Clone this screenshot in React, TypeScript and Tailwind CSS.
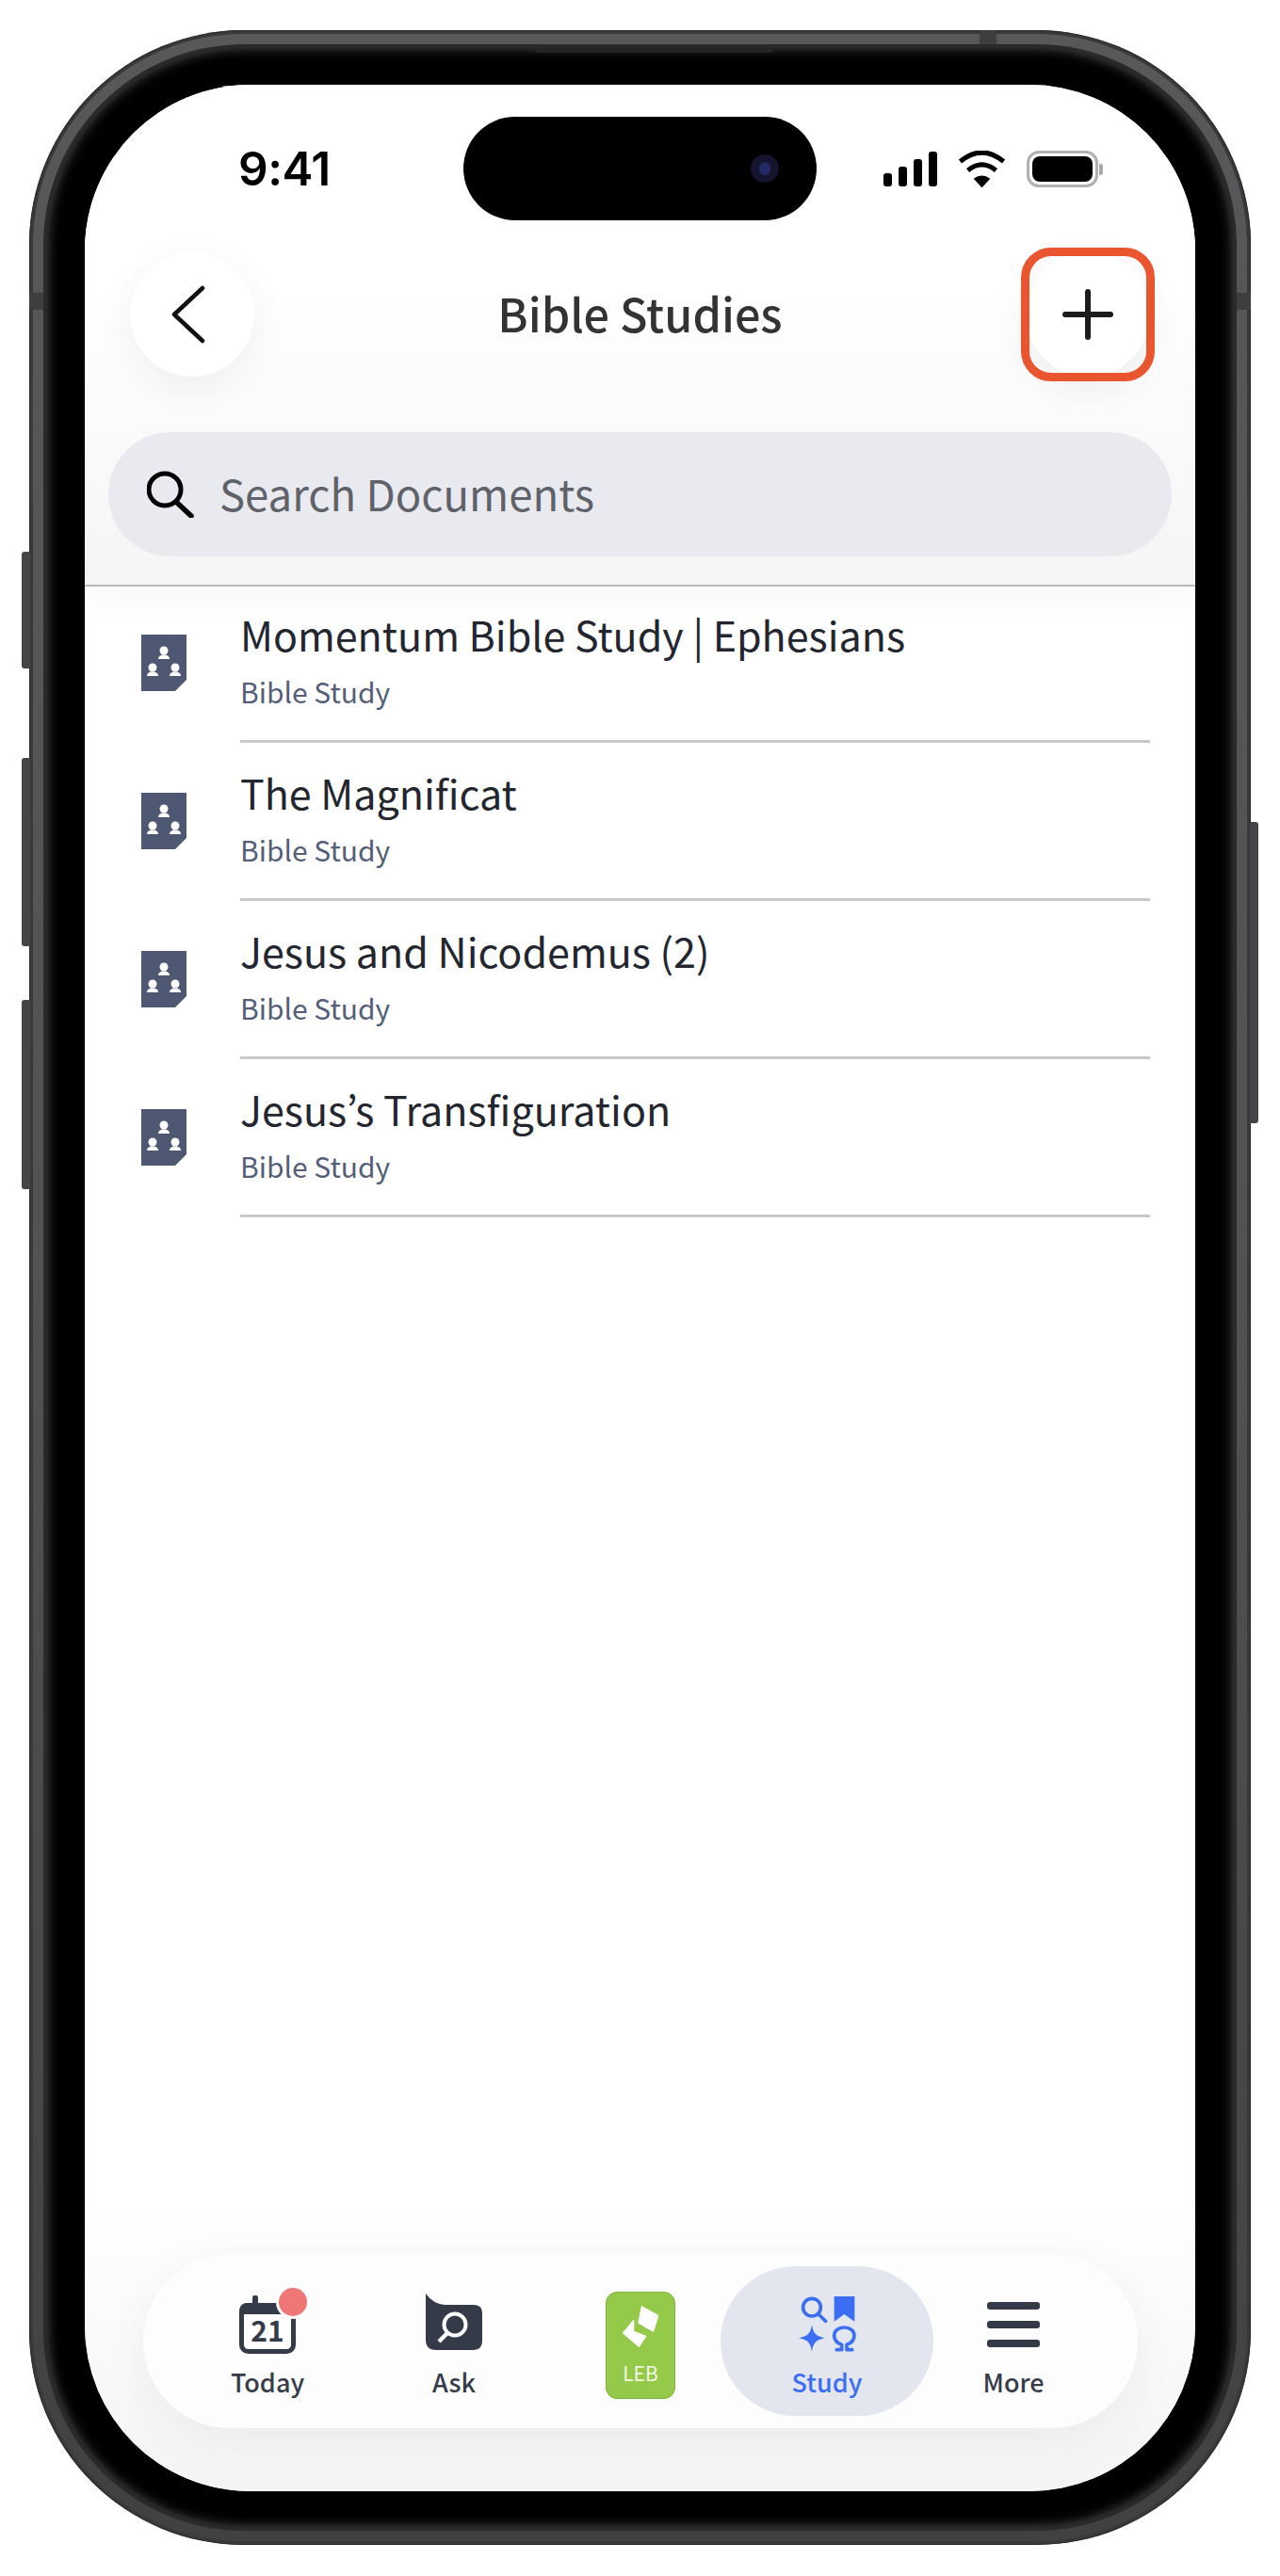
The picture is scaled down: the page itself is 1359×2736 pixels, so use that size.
const DOCS = ["Momentum Bible Study | Ephesians", "The Magnificat", "Jesus and Nicodemus (2)", "Jesus’s Transfiguration"];

function Signal() {
  return (
    <div className="flex h-[37px] items-end gap-[7px]">
      <div className="h-[14px] w-[9px] rounded-[3px] bg-black" />
      <div className="h-[21px] w-[9px] rounded-[3px] bg-black" />
      <div className="h-[29px] w-[9px] rounded-[3px] bg-black" />
      <div className="h-[37px] w-[9px] rounded-[3px] bg-black" />
    </div>
  );
}

function Wifi() {
  return (
    <svg width="51" height="39" viewBox="275 30 150 115">
      <path d="M282 64 Q350 8 418 64" fill="none" stroke="#000" strokeWidth="15" />
      <path d="M306 92 Q350 56 394 92" fill="none" stroke="#000" strokeWidth="15" />
      <path d="M350 146 L324 118 Q350 98 376 118 Z" fill="#000" />
    </svg>
  );
}

function Battery() {
  return (
    <div className="flex items-center gap-[1px]">
      <div className="flex h-[39px] w-[76px] rounded-[13px] border-[3px] border-[#b0b0b0] p-[3px]">
        <div className="flex-1 rounded-[8px] bg-black" />
      </div>
      <div className="h-[12px] w-[4px] rounded-r-[3px] bg-[#a8a8a8]" />
    </div>
  );
}

function DocIcon() {
  return (
    <svg width="48" height="60" viewBox="0 0 48 60" className="shrink-0">
      <path d="M0 0 H48 V48 L36 60 H0 Z" fill="#4f5872" />
      <g fill="#fff">
        <circle cx="24" cy="17" r="4.5" />
        <path d="M18 26 C18 23.5 20 21.5 24 21.5 C28 21.5 30 23.5 30 26 Z" />
        <circle cx="12" cy="35" r="4.5" />
        <path d="M6 44 C6 41.5 8 39.5 12 39.5 C16 39.5 18 41.5 18 44 Z" />
        <circle cx="36" cy="35" r="4.5" />
        <path d="M30 44 C30 41.5 32 39.5 36 39.5 C40 39.5 42 41.5 42 44 Z" />
      </g>
    </svg>
  );
}

function CalendarIcon() {
  return (
    <svg width="60" height="62" viewBox="0 0 60 62" className="overflow-visible">
      <rect x="14" y="0" width="6" height="12" rx="2" fill="#343a48" />
      <rect x="2.5" y="10.5" width="55" height="49" rx="7" fill="#fff" stroke="#343a48" strokeWidth="5" />
      <path d="M0 17 Q0 8 9 8 H51 Q60 8 60 17 V20 H0 Z" fill="#343a48" />
      <text x="30" y="49" textAnchor="middle" fontSize="30" fontWeight="700" fill="#343a48" fontFamily="'Noto Sans CJK JP', sans-serif">21</text>
      <circle cx="57" cy="7" r="18" fill="#fff" />
      <circle cx="57" cy="7" r="15" fill="#ef7776" />
    </svg>
  );
}

function AskIcon() {
  return (
    <svg width="60" height="60" viewBox="0 0 60 60">
      <path d="M0 0 Q8 11 20 12 H51 Q60 12 60 21 V50 Q60 60 50 60 H11 Q0 60 0 49 Z" fill="#343a48" />
      <circle cx="31" cy="33" r="11.5" fill="none" stroke="#fff" strokeWidth="4" />
      <path d="M23 42 L14 51" stroke="#fff" strokeWidth="4.5" />
    </svg>
  );
}

function StudyIcon() {
  return (
    <svg width="85" height="75" viewBox="0 0 255 225">
      <g fill="none" stroke="#3b6ef0" strokeWidth="11">
        <circle cx="78" cy="62" r="28" />
        <path d="M99 84 L122 106" strokeLinecap="round" />
        <path d="M157 197 H173 V181 C157 175 149 164 149 152 C149 136 163 126 181 126 C199 126 213 136 213 152 C213 164 205 175 189 181 V197 H206" strokeLinejoin="round" strokeLinecap="round" />
      </g>
      <path d="M149 27 H214 V107 L181 84 L149 107 Z" fill="#3b6ef0" />
      <path d="M78 118 C82 145 92 155 120 160 C92 165 82 175 78 203 C74 175 64 165 36 160 C64 155 74 145 78 118 Z" fill="#3b6ef0" />
    </svg>
  );
}

export default function App() {
  return (
    <div className="h-[2736px] w-[1359px] bg-white pl-[31px] pt-[32px] font-['Noto_Sans_CJK_JP',sans-serif]">
      {/* device frame */}
      <div className="relative h-[2671px] w-[1297px] rounded-[228px] bg-[#39393b] p-[4px] shadow-[inset_0_0_0_1px_#2c2c2e]">
        <div className="absolute left-[-8px] top-[554px] h-[124px] w-[9px] rounded-l-[3px] bg-[#454547]" />
        <div className="absolute left-[-8px] top-[773px] h-[200px] w-[9px] rounded-l-[3px] bg-[#454547]" />
        <div className="absolute left-[-8px] top-[1030px] h-[201px] w-[9px] rounded-l-[3px] bg-[#454547]" />
        <div className="absolute right-[-8px] top-[841px] h-[320px] w-[9px] rounded-r-[3px] bg-[#454547]" />
        <div className="absolute left-0 top-[279px] z-10 h-[18px] w-[15px] bg-[#3e3e40]" />
        <div className="absolute right-0 top-[279px] z-10 h-[18px] w-[15px] bg-[#3e3e40]" />
        <div className="absolute right-[270px] top-0 z-10 h-[15px] w-[18px] bg-[#3e3e40]" />
        <div className="h-full w-full rounded-[224px] bg-gradient-to-b from-[#58585a] via-[#525254] to-[#414143] p-[11px]">
          <div className="relative h-full w-full rounded-[213px] bg-[#2a2a2c] p-[3px]">
            <div className="absolute left-[520px] top-[3px] z-10 h-[6px] w-[256px] rounded-b-[6px] bg-[#252527]" />
            <div className="h-full w-full rounded-[210px] bg-black px-[41px] pb-[39px] pt-[40px] shadow-[inset_0_0_14px_rgba(120,120,120,0.75)]">
              {/* screen */}
              <div className="relative flex h-[2556px] w-[1179px] flex-col overflow-hidden rounded-[176px] bg-white">
                <div className="absolute left-[402px] top-[34px] z-20 flex h-[110px] w-[375px] items-center justify-end rounded-full bg-black pr-[40px]">
                  <div className="flex h-[30px] w-[30px] items-center justify-center rounded-full bg-[#14142e]">
                    <div className="h-[14px] w-[12px] rounded-full bg-[#232a63]" />
                  </div>
                </div>

                <div className="relative z-10 bg-gradient-to-b from-white from-40% to-[#f5f5f5] shadow-[0_14px_34px_rgba(0,0,0,0.03)]">
                  <div className="flex h-[178px] items-start justify-between pl-[163px] pr-[98px] pt-[70px]">
                    <div className="font-['Inter',sans-serif] text-[49.5px] font-semibold leading-[38px] tracking-[-0.5px] text-black">9:41</div>
                    <div className="flex items-center gap-[22px]">
                      <Signal />
                      <Wifi />
                      <Battery />
                    </div>
                  </div>
                  <div className="flex items-center justify-between px-[48px]">
                    <div className="flex h-[132px] w-[132px] items-center justify-center rounded-full bg-white shadow-[0_10px_40px_rgba(0,0,0,0.06)]">
                      <svg width="36" height="62" viewBox="0 0 36 62" fill="none" className="-ml-[9px]">
                        <path d="M33 3 L3 31 L33 59" stroke="#111" strokeWidth="4.5" strokeLinecap="round" strokeLinejoin="round" />
                      </svg>
                    </div>
                    <div className="mb-[5px] text-[48.5px] font-medium leading-[64px] text-[#333]">Bible Studies</div>
                    <div className="relative flex h-[132px] w-[132px] items-center justify-center rounded-full bg-white shadow-[0_10px_40px_rgba(0,0,0,0.07)]">
                      <svg width="54" height="54" viewBox="0 0 54 54" fill="none">
                        <path d="M27 3 V51 M3 27 H51" stroke="#1c1c1e" strokeWidth="6" strokeLinecap="round" />
                      </svg>
                      <div className="absolute -inset-[5px] rounded-[32px] border-[9px] border-[#e9552f]" />
                    </div>
                  </div>
                  <div className="mx-[25px] mt-[59px] flex h-[132px] items-center gap-[27px] rounded-[66px] bg-[#e9eaef] pl-[41px]">
                    <svg width="50" height="50" viewBox="0 0 50 50" fill="none">
                      <circle cx="19" cy="20" r="17" stroke="#000" strokeWidth="5" />
                      <path d="M31 33 L47 48" stroke="#000" strokeWidth="5.5" strokeLinecap="round" />
                    </svg>
                    <div className="mb-[5px] text-[45.5px] leading-[64px] text-[#5f6369]">Search Documents</div>
                  </div>
                  <div className="h-[30px]" />
                  <div className="h-[2px] bg-[#b8b8b8]" />
                </div>

                <div className="-mt-[2px] flex flex-col">
                  {DOCS.map((title) => (
                    <div key={title} className="flex pl-[60px] pr-[48px]">
                      <div className="w-[105px] shrink-0 pt-[53px]">
                        <DocIcon />
                      </div>
                      <div className="h-[168px] flex-1 border-b-[3px] border-[#c8c8c8] pt-[22px]">
                        <div className="text-[43px] leading-[60px] text-[#23262f]">{title}</div>
                        <div className="mt-[9px] text-[30px] leading-[44px] text-[#555e78]">Bible Study</div>
                      </div>
                    </div>
                  ))}
                </div>

                <div className="mt-auto bg-gradient-to-b from-white to-[#f4f4f4] pb-[67px] pt-[60px]">
                  <div className="mx-[62px] grid h-[185px] w-[1056px] grid-cols-5 items-center rounded-[92px] bg-[#fdfdfd] px-[33px] shadow-[0_12px_50px_rgba(0,0,0,0.05)]">
                    <div className="flex h-[159px] flex-col items-center pt-[29px]">
                      <div className="h-[64px] pt-[2px]"><CalendarIcon /></div>
                      <div className="mt-[12px] text-[27px] font-medium leading-[36px] text-[#363c4a]">Today</div>
                    </div>
                    <div className="flex h-[159px] flex-col items-center pt-[29px]">
                      <div className="h-[64px]"><AskIcon /></div>
                      <div className="mt-[12px] text-[27px] font-medium leading-[36px] text-[#363c4a]">Ask</div>
                    </div>
                    <div className="flex h-[159px] flex-col items-center pt-[27px]">
                      <div className="flex h-[114px] w-[74px] flex-col items-center rounded-[13px] bg-[#95c94a] pt-[15px] shadow-[inset_0_0_0_1px_#86b441]">
                        <svg width="40" height="44" viewBox="90 68 120 132">
                          <path d="M155 72 L205 100 L190 148 L145 122 Z" fill="#fff" stroke="#fff" strokeWidth="6" strokeLinejoin="round" />
                          <path d="M128 115 L95 155 L145 198 L167 165 L128 150 Z" fill="#fff" stroke="#fff" strokeWidth="4" strokeLinejoin="round" />
                        </svg>
                        <div className="mt-[15px] text-[21px] leading-[24px] text-[#f1f8e4]">LEB</div>
                      </div>
                    </div>
                    <div className="flex h-[159px] w-[226px] flex-col items-center justify-self-center rounded-[80px] bg-[#e3e6ef] pt-[23px]">
                      <div className="h-[75px]"><StudyIcon /></div>
                      <div className="mt-[7px] text-[27px] font-medium leading-[36px] text-[#3b6ef0]">Study</div>
                    </div>
                    <div className="flex h-[159px] flex-col items-center pt-[38px]">
                      <div className="flex h-[48px] w-[56px] flex-col justify-between">
                        <div className="h-[8px] rounded-[3px] bg-[#343a48]" />
                        <div className="h-[8px] rounded-[3px] bg-[#343a48]" />
                        <div className="h-[8px] rounded-[3px] bg-[#343a48]" />
                      </div>
                      <div className="mt-[19px] text-[27px] font-medium leading-[36px] text-[#363c4a]">More</div>
                    </div>
                  </div>
                </div>
              </div>
            </div>
          </div>
        </div>
      </div>
    </div>
  );
}
